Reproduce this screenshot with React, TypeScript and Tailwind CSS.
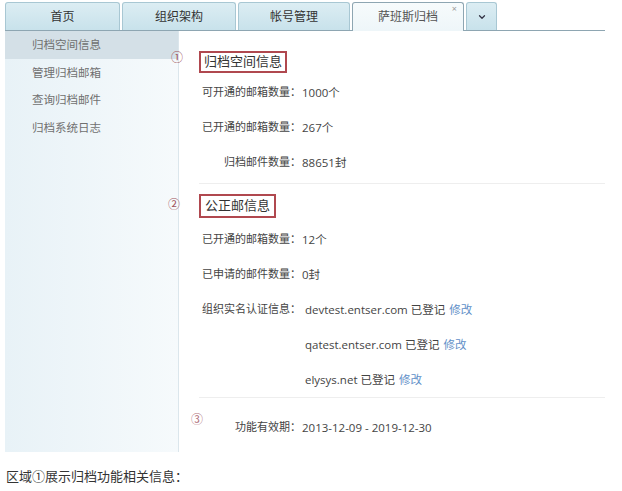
import { ChevronDown } from 'lucide-react';

const tabs = [
  { label: '首页', w: 'w-[115px]' },
  { label: '组织架构', w: 'w-[114px]' },
  { label: '帐号管理', w: 'w-[112px]' },
];

const menu = ['归档空间信息', '管理归档邮箱', '查询归档邮件', '归档系统日志'];

const Row = ({ label, children }: { label: string; children: React.ReactNode }) => (
  <div className="flex h-[35px] items-center">
    <span className="w-[102px] shrink-0 text-right">{label}</span>
    <span className="pl-[1px] text-[11.5px]">{children}</span>
  </div>
);

const Edit = () => <span className="ml-[4px] text-[#5f8fc8]">修改</span>;

export default function App() {
  return (
    <div className="relative h-[491px] w-[622px] overflow-hidden bg-white font-['Open_Sans','Noto_Sans_CJK_SC',sans-serif] text-[#444]">
      <div className="pl-[5px] pr-[17px] pt-[3px]">
        {/* tabs */}
        <div className="flex h-[28px] items-end gap-[2px] border-b border-[#8ea6b2]">
          {tabs.map((t) => (
            <div
              key={t.label}
              className={`${t.w} flex h-[28px] items-center justify-center rounded-t-[3px] border border-b-0 border-[#a8c7d3] bg-gradient-to-b from-[#dcedf3] to-[#c8e2eb] text-[12px] text-[#333]`}
            >
              {t.label}
            </div>
          ))}
          <div className="relative -mb-px flex h-[29px] w-[112px] items-center justify-center rounded-t-[3px] border border-b-0 border-[#8ea6b2] bg-gradient-to-b from-[#f7fbfc] to-[#eef6f9] text-[12px] text-[#555]">
            萨班斯归档
            <span className="absolute right-[6px] top-[1px] text-[9px] leading-none text-[#999]">×</span>
          </div>
          <div className="flex h-[28px] w-[31px] items-center justify-center rounded-t-[3px] border border-b-0 border-[#a8c7d3] bg-gradient-to-b from-[#dcedf3] to-[#c8e2eb]">
            <ChevronDown size={10} strokeWidth={3} className="text-[#334]" />
          </div>
        </div>

        {/* body */}
        <div className="flex h-[421px]">
          <div className="w-[174px] shrink-0 border-r border-[#dbe6ec] bg-gradient-to-r from-[#e8f2f7] to-[#f6fafc]">
            {menu.map((m, i) => (
              <div
                key={m}
                className={`flex h-[27.5px] items-center pl-[27px] text-[11.5px] text-[#707070] ${i === 0 ? 'bg-[#d4e0e7]' : ''}`}
              >
                {m}
              </div>
            ))}
          </div>

          <div className="flex-1 pl-[20px] text-[11px]">
            <div className="mt-[20px] inline-flex h-[22px] items-center border-2 border-[#b0484f] px-[3px] text-[13px] text-[#333]">
              归档空间信息
            </div>
            <div className="mt-[2px]">
              <Row label="可开通的邮箱数量：">1000个</Row>
              <Row label="已开通的邮箱数量：">267个</Row>
              <Row label="归档邮件数量：">88651封</Row>
            </div>
            <div className="mt-[3px] border-t border-[#eeeeee]" />

            <div className="mt-[10px] inline-flex h-[24px] items-center border-2 border-[#b0484f] px-[4px] text-[13px] text-[#333]">
              公正邮信息
            </div>
            <div className="mt-[4px]">
              <Row label="已开通的邮箱数量：">12个</Row>
              <Row label="已申请的邮件数量：">0封</Row>
              <Row label="组织实名认证信息：">
                <span className="pl-[3px]">devtest.entser.com 已登记</span>
                <Edit />
              </Row>
              <Row label="">
                <span className="pl-[3px]">qatest.entser.com 已登记</span>
                <Edit />
              </Row>
              <Row label="">
                <span className="pl-[3px]">elysys.net 已登记</span>
                <Edit />
              </Row>
            </div>
            <div className="border-t border-[#eeeeee]" />

            <div className="mt-[12px]">
              <Row label="功能有效期：">2013-12-09 - 2019-12-30</Row>
            </div>
          </div>
        </div>
      </div>

      {/* annotation markers */}
      <span className="absolute left-[171px] top-[52px] text-[12px] leading-none text-[#a0525a]">①</span>
      <span className="absolute left-[168px] top-[199px] text-[12px] leading-none text-[#a0525a]">②</span>
      <span className="absolute left-[191px] top-[414px] text-[12px] leading-none text-[#b0707a]">③</span>

      <div className="absolute left-[6px] top-[467px] text-[13px] text-[#333]">区域①展示归档功能相关信息：</div>
    </div>
  );
}
